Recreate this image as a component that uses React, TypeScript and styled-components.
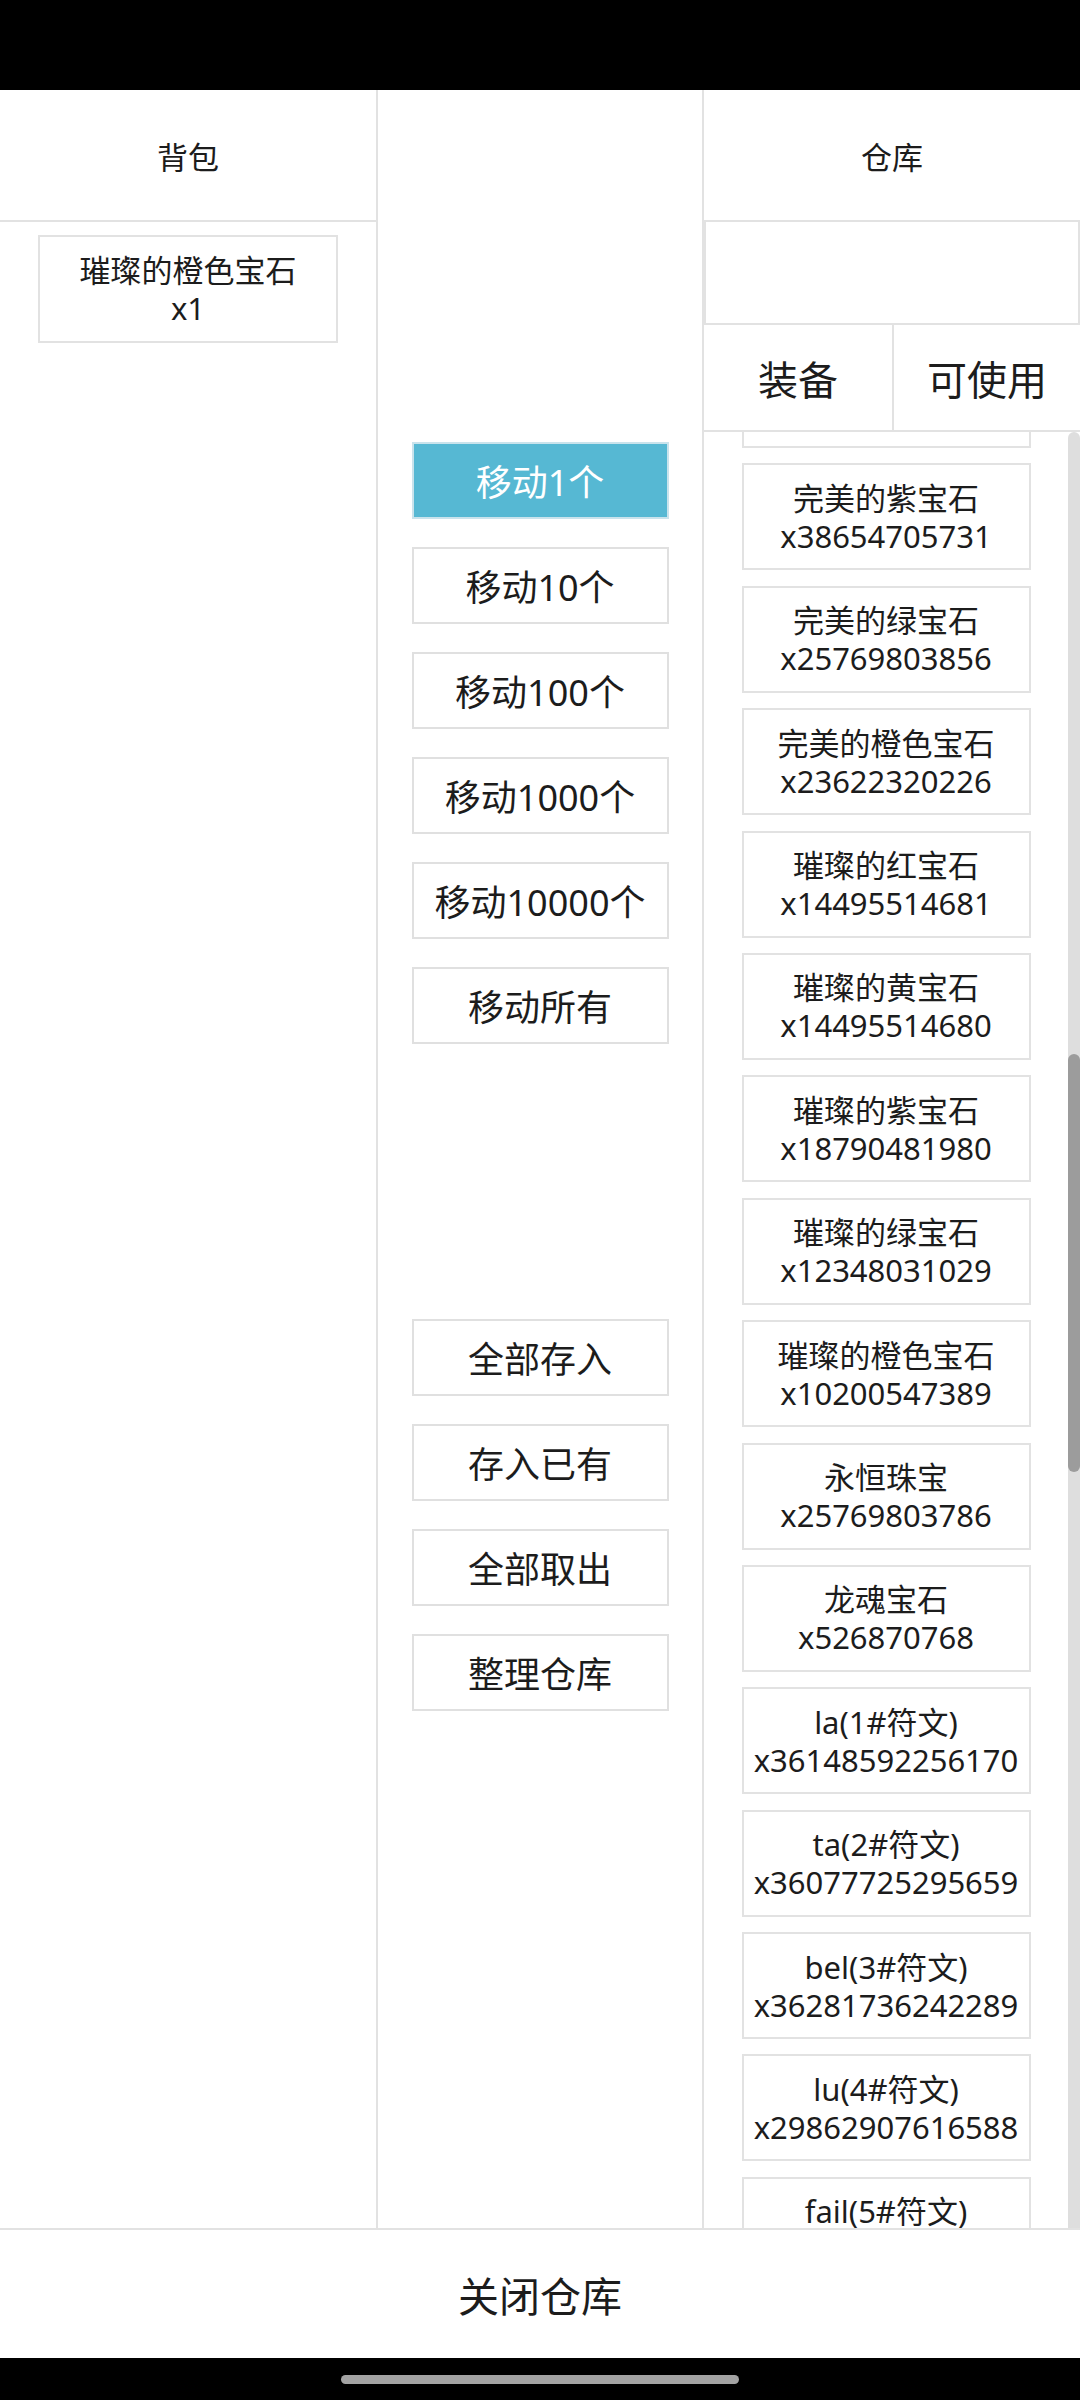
import React, { useEffect, useRef } from "react";
import styled, { createGlobalStyle } from "styled-components";

const GlobalStyle = createGlobalStyle`
  html, body { margin: 0; padding: 0; background: #ffffff; }
  body {
    font-family: "Noto Sans", "Noto Sans CJK SC", sans-serif;
    color: #1c1c1c;
  }
  * { box-sizing: border-box; }
`;

const Screen = styled.div`
  width: 1080px;
  height: 2400px;
  display: flex;
  flex-direction: column;
  background: #ffffff;
`;

const StatusBar = styled.div`
  flex: none;
  height: 90px;
  background: #000000;
`;

const Main = styled.div`
  flex: none;
  height: 2138px;
  display: flex;
`;

const Column = styled.div<{ $w: number; $divider?: boolean }>`
  flex: none;
  width: ${(p) => p.$w}px;
  height: 100%;
  display: flex;
  flex-direction: column;
  min-height: 0;
  border-right: ${(p) => (p.$divider ? "2px solid #e2e2e2" : "none")};
`;

const Header = styled.div`
  flex: none;
  height: 132px;
  display: flex;
  align-items: center;
  justify-content: center;
  font-size: 31px;
  border-bottom: 2px solid #e2e2e2;
`;

const ItemBox = styled.div`
  flex: none;
  width: 300px;
  height: 108px;
  border: 2px solid #e2e2e2;
  display: flex;
  flex-direction: column;
  align-items: center;
  justify-content: center;
  font-size: 31px;
  line-height: 38px;
  text-align: center;
  white-space: nowrap;
`;

const BagList = styled.div`
  display: flex;
  flex-direction: column;
  align-items: center;
  padding-top: 13px;
`;

const ActionStack = styled.div`
  display: flex;
  flex-direction: column;
  align-items: center;
  padding-top: 352px;
`;

const ActionGroup = styled.div<{ $offset?: number }>`
  display: flex;
  flex-direction: column;
  align-items: center;
  gap: 28px;
  margin-top: ${(p) => p.$offset ?? 0}px;
`;

const ActionButton = styled.button<{ $active?: boolean }>`
  width: 257px;
  height: 77px;
  padding: 0;
  margin: 0;
  border: 2px solid ${(p) => (p.$active ? "#c9e3ec" : "#e0e0e0")};
  background: ${(p) => (p.$active ? "#56b8d3" : "#ffffff")};
  color: ${(p) => (p.$active ? "#ffffff" : "#1c1c1c")};
  font-family: inherit;
  font-size: 36px;
  display: flex;
  align-items: center;
  justify-content: center;
  white-space: nowrap;
`;

const SearchBox = styled.div`
  flex: none;
  height: 103px;
  border: 2px solid #e2e2e2;
  border-top: none;
`;

const Tabs = styled.div`
  flex: none;
  height: 107px;
  display: flex;
  border-bottom: 2px solid #e2e2e2;
`;

const Tab = styled.div<{ $w?: number }>`
  flex: ${(p) => (p.$w ? "none" : "1")};
  width: ${(p) => (p.$w ? `${p.$w}px` : "auto")};
  display: flex;
  align-items: center;
  justify-content: center;
  font-size: 40px;
  border-right: ${(p) => (p.$w ? "2px solid #e2e2e2" : "none")};
`;

const ListArea = styled.div`
  flex: 1;
  min-height: 0;
  display: flex;
`;

const StoreList = styled.div`
  flex: 1;
  min-width: 0;
  overflow: hidden;
`;

const StoreItems = styled.div`
  display: flex;
  flex-direction: column;
  align-items: center;
  gap: 15.4px;
  padding: 14px 0 15.4px;
`;

const StoreItem = styled(ItemBox)`
  width: 289px;
  height: 107px;
`;

const ScrollTrack = styled.div`
  flex: none;
  width: 12px;
  height: 100%;
  background: #dedede;
  border-radius: 6px 6px 0 0;
  display: flex;
  flex-direction: column;
`;

const ScrollThumb = styled.div`
  flex: none;
  width: 12px;
  background: #9c9c9c;
  border-radius: 6px;
`;

const Line = styled.span`
  display: block;
`;

const CloseBar = styled.div`
  flex: none;
  height: 130px;
  border-top: 2px solid #e2e2e2;
  display: flex;
  align-items: center;
  justify-content: center;
  font-size: 41px;
`;

const NavBar = styled.div`
  flex: none;
  height: 42px;
  background: #000000;
  display: flex;
  justify-content: center;
  padding-top: 17px;
`;

const HomePill = styled.div`
  width: 398px;
  height: 9px;
  border-radius: 5px;
  background: #a3a3a3;
`;

type Item = { name: string; count: string };

const storeItems: Item[] = [
  { name: "完美的黄宝石", count: "x30064771071" },
  { name: "完美的紫宝石", count: "x38654705731" },
  { name: "完美的绿宝石", count: "x25769803856" },
  { name: "完美的橙色宝石", count: "x23622320226" },
  { name: "璀璨的红宝石", count: "x14495514681" },
  { name: "璀璨的黄宝石", count: "x14495514680" },
  { name: "璀璨的紫宝石", count: "x18790481980" },
  { name: "璀璨的绿宝石", count: "x12348031029" },
  { name: "璀璨的橙色宝石", count: "x10200547389" },
  { name: "永恒珠宝", count: "x25769803786" },
  { name: "龙魂宝石", count: "x526870768" },
  { name: "la(1#符文)", count: "x36148592256170" },
  { name: "ta(2#符文)", count: "x36077725295659" },
  { name: "bel(3#符文)", count: "x36281736242289" },
  { name: "lu(4#符文)", count: "x29862907616588" },
  { name: "fail(5#符文)", count: "x29750311232156" },
];

/* scroll geometry of the full warehouse list (63 entries, 21 above the first one rendered) */
const ITEM_PITCH = 122.4;
const PAD_TOP = 14;
const TOTAL_ITEMS = 63;
const ITEMS_ABOVE = 21;
const VIEW_H = 1796;
const CONTENT_H = PAD_TOP + TOTAL_ITEMS * ITEM_PITCH;
const SCROLL_TOP = PAD_TOP + (ITEMS_ABOVE + 1) * ITEM_PITCH - 31;
const THUMB_H = (VIEW_H * VIEW_H) / CONTENT_H;
const THUMB_TOP = ((VIEW_H - THUMB_H) * SCROLL_TOP) / (CONTENT_H - VIEW_H);
const LOCAL_SCROLL = PAD_TOP + ITEM_PITCH - 31;

const moveButtons = ["移动1个", "移动10个", "移动100个", "移动1000个", "移动10000个", "移动所有"];
const bulkButtons = ["全部存入", "存入已有", "全部取出", "整理仓库"];

export default function App() {
  const listRef = useRef<HTMLDivElement>(null);

  useEffect(() => {
    if (listRef.current) {
      listRef.current.scrollTop = LOCAL_SCROLL;
    }
  }, []);

  return (
    <>
      <GlobalStyle />
      <Screen>
        <StatusBar />
        <Main>
          <Column $w={378} $divider>
            <Header>背包</Header>
            <BagList>
              <ItemBox>
                <Line>璀璨的橙色宝石</Line>
                <Line>x1</Line>
              </ItemBox>
            </BagList>
          </Column>
          <Column $w={326} $divider>
            <ActionStack>
              <ActionGroup>
                {moveButtons.map((b, i) => (
                  <ActionButton key={b} $active={i === 0}>
                    {b}
                  </ActionButton>
                ))}
              </ActionGroup>
              <ActionGroup $offset={275}>
                {bulkButtons.map((b) => (
                  <ActionButton key={b}>{b}</ActionButton>
                ))}
              </ActionGroup>
            </ActionStack>
          </Column>
          <Column $w={376}>
            <Header>仓库</Header>
            <SearchBox />
            <Tabs>
              <Tab $w={190}>装备</Tab>
              <Tab>可使用</Tab>
            </Tabs>
            <ListArea>
              <StoreList ref={listRef}>
                <StoreItems>
                  {storeItems.map((it, i) => (
                    <StoreItem key={i}>
                      <Line>{it.name}</Line>
                      <Line>{it.count}</Line>
                    </StoreItem>
                  ))}
                </StoreItems>
              </StoreList>
              <ScrollTrack>
                <ScrollThumb style={{ height: THUMB_H, marginTop: THUMB_TOP }} />
              </ScrollTrack>
            </ListArea>
          </Column>
        </Main>
        <CloseBar>关闭仓库</CloseBar>
        <NavBar>
          <HomePill />
        </NavBar>
      </Screen>
    </>
  );
}
